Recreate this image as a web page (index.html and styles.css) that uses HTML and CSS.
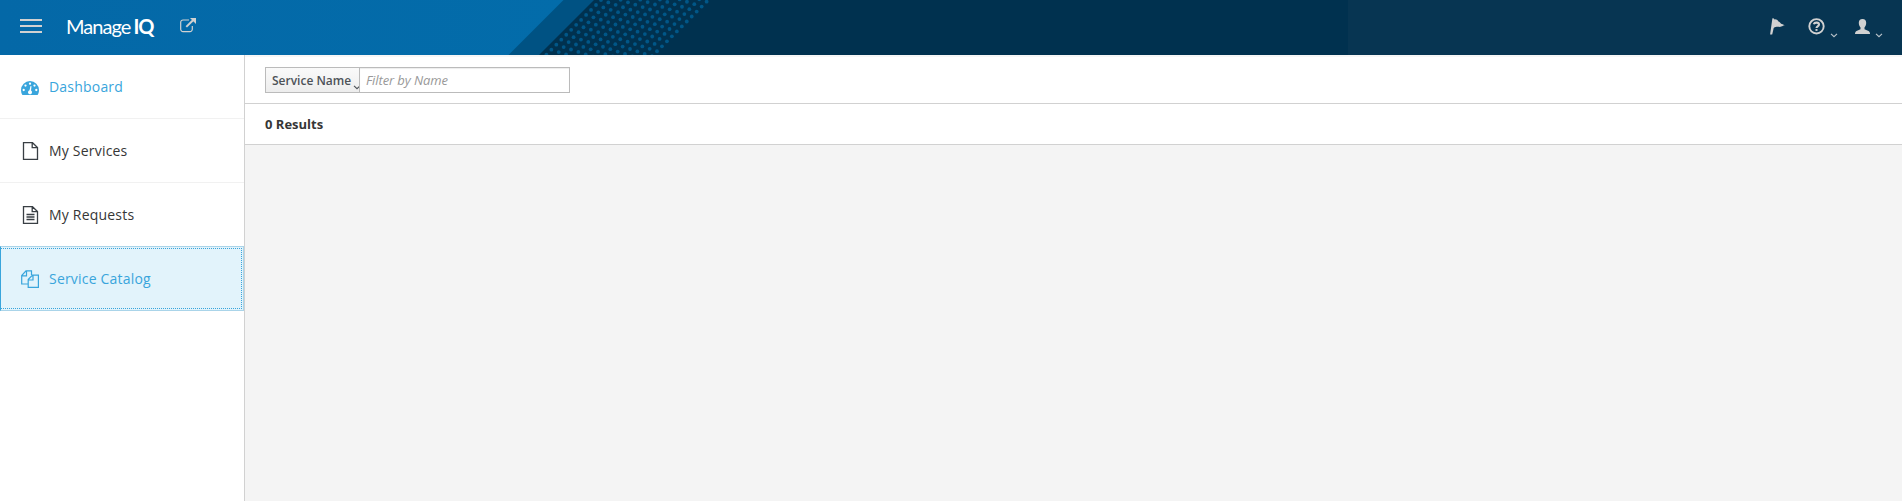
FILE: index.html
```html
<!DOCTYPE html>
<html lang="en">
<head>
<meta charset="utf-8">
<title>ManageIQ Service UI</title>
<link rel="stylesheet" href="styles.css">
</head>
<body>
<header class="navbar">
  <svg class="navbar-art" width="1902" height="55" viewBox="0 0 1902 55" aria-hidden="true">
    <defs>
      <linearGradient id="sky" x1="0" x2="1"><stop offset="0" stop-color="#0468a7"/><stop offset="1" stop-color="#036caa"/></linearGradient>
    </defs>
    <rect width="1902" height="55" fill="#00314f"/>
    <path d="M0 0H594L539 55H0z" fill="#005283"/>
    <path d="M0 0H563.500L508.500 55H0z" fill="url(#sky)"/>
    <rect x="1348" width="554" height="55" fill="#073552"/>
    <g id="dot-field" fill="#005788"></g>
  </svg>
  <div class="navbar-start">
    <button class="toggle" aria-label="Menu"><i></i><i></i><i></i></button>
    <span class="brand">Manage<b>IQ</b></span>
    <svg class="external" width="16" height="15" viewBox="0 0 16 15" fill="none" stroke="#d1d1d1"><path d="M9 2H3a2.300 2.300 0 0 0-2.300 2.300v7A2.300 2.300 0 0 0 3 13.600h7a2.300 2.300 0 0 0 2.300-2.300V8" stroke-width="1.200"/><path d="M6.300 8.900L13 2.300" stroke-width="2"/><path d="M10 0h6v6z" fill="#d1d1d1" stroke="none"/></svg>
  </div>
  <div class="navbar-end">
    <svg class="flag" width="15" height="17" viewBox="0 0 15 17" fill="#d1d1d1"><path d="M2.400.3L4 .5l.2 1C6 1 7.500 2 8.500 3.500c1.500.3 2 2.500 3.500 2.600l2.700 1.200c-2 .3-3 1.500-4.800 1.600-2 0-4-.5-6.200 1L2.200 16.500H.1z"/></svg>
    <svg class="help" width="17" height="17" viewBox="0 0 17 17" fill="none" stroke="#d1d1d1"><circle cx="8.500" cy="8.300" r="7.200" stroke-width="1.900"/><path d="M5.800 6.200C6.500 4 11 4.100 11 6.600c0 1.800-2.500 1.600-2.500 3.300" stroke-width="2.100"/><path d="M7.500 11h2v1.900h-2z" fill="#d1d1d1" stroke="none"/></svg>
    <svg class="caret caret-help" width="8" height="5" viewBox="0 0 8 5"><path d="M1 .8l3 2.900L7 .8" fill="none" stroke="#b9c3ca" stroke-width="1.100"/></svg>
    <svg class="user" width="15" height="16" viewBox="0 0 15 16" fill="#d1d1d1"><path d="M7.500 0c2.500 0 3.700 1.500 3.700 3.800 0 2.200-.8 3.700-1.700 4.700v1.700l4 1.700c1 .5 1.500 1.500 1.500 3.100H0c0-1.600.5-2.600 1.500-3.100l4-1.700V8.500c-.9-1-1.700-2.500-1.700-4.700C3.800 1.500 5 0 7.500 0z"/></svg>
    <svg class="caret caret-user" width="8" height="5" viewBox="0 0 8 5"><path d="M1 .8l3 2.900L7 .8" fill="none" stroke="#b9c3ca" stroke-width="1.100"/></svg>
  </div>
</header>
<div class="layout">
  <nav class="sidebar">
    <a class="item current"><svg width="18" height="15" viewBox="0 0 18 15"><path d="M9 0a9 9 0 0 1 9 9c0 2-.5 3.600-1.400 5.100H1.400A9.600 9.600 0 0 1 0 9a9 9 0 0 1 9-9z" fill="#39a5dc"/><g fill="#fff"><circle cx="2.700" cy="9" r="1.150"/><circle cx="4.500" cy="4.600" r="1.150"/><circle cx="9" cy="2.700" r="1.150"/><circle cx="13.500" cy="4.600" r="1.150"/><circle cx="15.300" cy="9" r="1.150"/><path d="M9.500 5l1 .2-.5 4.300a2 2 0 1 1-1.500-.2z"/></g></svg><span>Dashboard</span></a>
    <a class="item"><svg width="18" height="18" viewBox="0 0 18 18"><path d="M2.500.7h9l5 4.800v11.800h-14zM11.200.7v5h5" fill="none" stroke="#393f44" stroke-width="1.300"/></svg><span>My Services</span></a>
    <a class="item"><svg width="18" height="18" viewBox="0 0 18 18"><path d="M2.500.7h9l5 4.800v11.800h-14zM11.200.7v5h5M5.500 8.500h8M5.500 11h8M5.500 13.500h8" fill="none" stroke="#393f44" stroke-width="1.300"/></svg><span>My Requests</span></a>
    <a class="item active"><svg width="18" height="18" viewBox="0 0 18 18"><path d="M7 14H.7V5.500L5 .9h5.500v4M5.500.9v5H.7M7.200 9.500l4.300-4.300h5.900v12.100H7.200zM12 5.200v4.800H7.200" fill="none" stroke="#39a5dc" stroke-width="1.200"/></svg><span>Service Catalog</span></a>
  </nav>
  <main class="content">
    <form class="toolbar">
      <button type="button" class="field"><span>Service Name</span><svg width="8" height="5" viewBox="0 0 8 5"><path d="M1 .8l3 2.900L7 .8" fill="none" stroke="#4d5258" stroke-width="1.100"/></svg></button>
      <input class="filter" placeholder="Filter by Name" aria-label="Filter by Name">
    </form>
    <div class="results">0 Results</div>
  </main>
</div>
<script src="dots.js"></script>
</body>
</html>
```

FILE: styles.css
```css
* { box-sizing: border-box; }
body { margin: 0; height: 501px; overflow: hidden; background: #f4f4f4; font-family: "Open Sans", sans-serif; font-size: 13px; color: #363636; }
button { padding: 0; border: 0; background: none; font: inherit; }
svg { display: block; flex: none; }
.navbar { position: relative; height: 55px; display: flex; justify-content: space-between; background: #00314f; }
.navbar-art { position: absolute; inset: 0; }
.navbar-start, .navbar-end { position: relative; display: flex; align-items: flex-start; }
.navbar-start { padding-left: 20px; }
.toggle { width: 22px; margin-top: 19px; display: grid; gap: 4px; }
.toggle i { height: 2px; background: #d1d1d1; }
.brand { width: 88px; margin: 12px 0 0 24px; font: 20px/28px Lato, sans-serif; letter-spacing: -.95px; color: #fff; white-space: nowrap; }
.brand b { margin-left: 3px; font-weight: 700; letter-spacing: -1.2px; }
.external { margin: 18px 0 0 26px; }
.navbar-end { padding-right: 19px; }
.flag { margin-top: 18px; }
.help { margin: 18px 0 0 23px; }
.caret { margin-top: 33px; }
.caret-help { margin-left: 5px; }
.user { margin: 19px 0 0 17px; }
.caret-user { margin-left: 5px; }
.layout { display: flex; height: 446px; }
.sidebar { width: 245px; background: #fff; border-right: 1px solid #d1d1d1; }
.item { height: 64px; display: flex; align-items: center; gap: 10px; padding: 0 0 0 21px; border-bottom: 1px solid #f1f1f1; font-size: 14px; letter-spacing: .2px; }
.item.current svg { margin-top: 3px; }
.item:nth-child(3) { height: 63px; border: 0; }
.item.current, .item.active { color: #39a5dc; }
.item.active { height: 65px; position: relative; background: #e2f3fb; border: 1px solid #aad4e9; border-left-color: #39a5dc; padding-left: 20px; }
.item.active::after { content: ""; position: absolute; inset: 1px 1px 1px 0; border: 1px dotted #39a5dc; border-left: 0; }
.content { flex: 1; }
.toolbar { height: 49px; padding: 12px 20px; display: flex; background: #fff; border-bottom: 1px solid #d1d1d1; box-shadow: inset 0 2px #f6f6f6; }
.toolbar { margin: 0; }
.field { width: 94px; height: 26px; padding-left: 6px; display: flex; align-items: center; border: 1px solid #bbb; border-right: 0; background: linear-gradient(#fafafa, #ededed); color: #4d5258; font-size: 12px; font-weight: 600; white-space: nowrap; }
.field span { width: 78px; text-align: left; }
.field svg { margin: 14px 0 0 3px; }
.filter { width: 211px; height: 26px; padding: 0 6px; border: 1px solid #bbb; border-radius: 0; font: 13px "Open Sans", sans-serif; letter-spacing: -.1px; box-shadow: inset 0 1px 1px rgba(0,0,0,.075); }
.filter::placeholder { color: #999; font-style: italic; opacity: 1; }
.results { height: 41px; padding-left: 20px; line-height: 40px; font-weight: 700; background: #fff; border-bottom: 1px solid #d1d1d1; }
```

FILE: dots.js
```js
const field = document.getElementById("dot-field");
for (let column = 0; column <= 11; column++) {
  for (let row = -18; row <= 14; row++) {
    const dot = document.createElementNS("http://www.w3.org/2000/svg", "circle");
    dot.setAttribute("cx", 596 + column * 7.35 - row * 4.96);
    dot.setAttribute("cy", 5 + column * 2.4 + row * 4.96);
    dot.setAttribute("r", 1.9);
    field.appendChild(dot);
  }
}
```
